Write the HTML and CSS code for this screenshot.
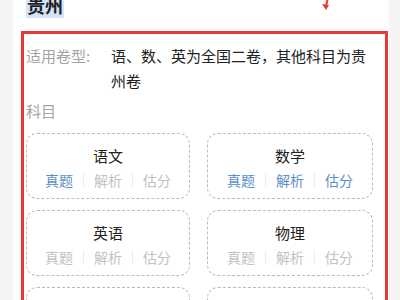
FILE: index.html
```html
<!DOCTYPE html>
<html lang="zh-CN">
<head>
    <meta charset="UTF-8">
    <meta name="viewport" content="width=device-width, initial-scale=1.0">
    <title>贵州</title>
    <link rel="stylesheet" href="styles.css">
</head>
<body>
<div class="card">
    <h2 class="region"><span class="selected">贵州</span></h2>
    <svg class="mark" width="14" height="14" viewBox="0 0 14 14">
        <path d="M9 0 L7 8" stroke="#e53935" stroke-width="2" fill="none"/>
        <path d="M3 6 L7 12 L10 7 Z" fill="#e53935"/>
    </svg>
    <div class="box">
        <div class="info-row">
            <div class="info-label">适用卷型:</div>
            <div class="info-value">语、数、英为全国二卷，其他科目为贵州卷</div>
        </div>
        <div class="section-title">科目</div>
        <div class="subjects">
            <div class="subject">
                <div class="subject-name">语文</div>
                <div class="links">
                    <span class="link on">真题</span><i class="sep"></i>
                    <span class="link">解析</span><i class="sep"></i>
                    <span class="link">估分</span>
                </div>
            </div>
            <div class="subject">
                <div class="subject-name">数学</div>
                <div class="links">
                    <span class="link on">真题</span><i class="sep"></i>
                    <span class="link on">解析</span><i class="sep"></i>
                    <span class="link on">估分</span>
                </div>
            </div>
            <div class="subject">
                <div class="subject-name">英语</div>
                <div class="links">
                    <span class="link">真题</span><i class="sep"></i>
                    <span class="link">解析</span><i class="sep"></i>
                    <span class="link">估分</span>
                </div>
            </div>
            <div class="subject">
                <div class="subject-name">物理</div>
                <div class="links">
                    <span class="link">真题</span><i class="sep"></i>
                    <span class="link">解析</span><i class="sep"></i>
                    <span class="link">估分</span>
                </div>
            </div>
            <div class="subject"></div>
            <div class="subject"></div>
        </div>
    </div>
</div>
</body>
</html>
```

FILE: styles.css
```css
/* Page */
body {
    margin: 0;
    background-color: #f4f4f5;
    font-family: "Noto Sans CJK SC", "Noto Sans", sans-serif;
    overflow: hidden;
}

/* White card */
.card {
    position: relative;
    margin: -8px 0 0 13px;
    width: 376px;
    padding: 0 1px 0 8px;
    box-sizing: border-box;
    background-color: #ffffff;
}

.region {
    margin: 0;
    padding-left: 5px;
    font-size: 18px;
    line-height: 26px;
    font-weight: bold;
    color: #1f1f1f;
}

.selected {
    background-color: #d3e5f8;
    padding: 0 1px;
}

/* Annotation arrow */
.mark {
    position: absolute;
    left: 306px;
    top: 6px;
}

/* Red outlined area */
.box {
    margin-top: 13px;
    border: 3px solid #e53935;
    padding: 9px 12px 0 2px;
    height: 300px;
}

.info-row {
    display: flex;
    font-size: 15px;
    line-height: 25px;
}

.info-label {
    width: 85px;
    flex-shrink: 0;
    color: #a3a3a3;
}

.info-value {
    color: #222222;
}

.section-title {
    margin-top: 5px;
    font-size: 15px;
    line-height: 25px;
    color: #a3a3a3;
}

/* Subject grid */
.subjects {
    display: grid;
    grid-template-columns: 164px 166px;
    column-gap: 17px;
    row-gap: 11px;
    margin-top: 10px;
}

.subject {
    height: 66px;
    box-sizing: border-box;
    border: 1px dashed #b6bccd;
    border-radius: 11px;
    text-align: center;
    padding-top: 12px;
}

.subject-name {
    font-size: 15px;
    line-height: 20px;
    color: #222222;
}

.links {
    display: flex;
    justify-content: center;
    align-items: center;
    margin-top: 4px;
    font-size: 14px;
    line-height: 20px;
}

.link {
    color: #c2c2c2;
}

.link.on {
    color: #5b8fc9;
}

.sep {
    width: 1px;
    height: 14px;
    margin: 0 10px;
    background-color: #ececec;
}
```
